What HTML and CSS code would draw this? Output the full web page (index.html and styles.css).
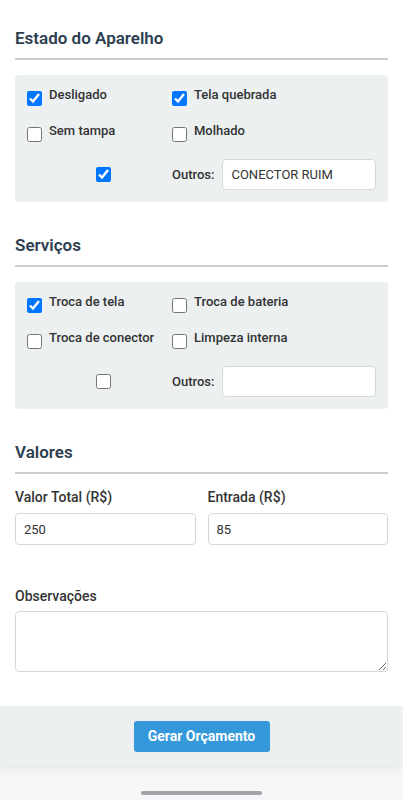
FILE: index.html
```html
<!DOCTYPE html>
<html lang="pt-BR">
<head>
  <meta charset="UTF-8" />
  <meta name="viewport" content="width=device-width, initial-scale=1.0"/>
  <title>Orçamento</title>
  <link rel="stylesheet" href="styles.css">
</head>
<body>
  <div class="page">
    <!-- Estado -->
    <div class="section">
      <h2>Estado do Aparelho</h2>
      <div class="box">
        <label class="check"><input type="checkbox" checked><span>Desligado</span></label>
        <label class="check"><input type="checkbox" checked><span>Tela quebrada</span></label>
        <label class="check"><input type="checkbox"><span>Sem tampa</span></label>
        <label class="check"><input type="checkbox"><span>Molhado</span></label>
        <div class="other-check"><input type="checkbox" checked></div>
        <div class="other">
          <span>Outros:</span>
          <input type="text" value="CONECTOR RUIM">
        </div>
      </div>
    </div>

    <!-- Servicos -->
    <div class="section">
      <h2>Serviços</h2>
      <div class="box">
        <label class="check"><input type="checkbox" checked><span>Troca de tela</span></label>
        <label class="check"><input type="checkbox"><span>Troca de bateria</span></label>
        <label class="check"><input type="checkbox"><span>Troca de conector</span></label>
        <label class="check"><input type="checkbox"><span>Limpeza interna</span></label>
        <div class="other-check"><input type="checkbox"></div>
        <div class="other">
          <span>Outros:</span>
          <input type="text" value="">
        </div>
      </div>
    </div>

    <!-- Valores -->
    <div class="section">
      <h2>Valores</h2>
      <div class="values">
        <div class="field">
          <label>Valor Total (R$)</label>
          <input type="text" value="250">
        </div>
        <div class="field">
          <label>Entrada (R$)</label>
          <input type="text" value="85">
        </div>
      </div>
      <div class="field notes">
        <label>Observações</label>
        <textarea></textarea>
      </div>
    </div>
  </div>

  <div class="footer">
    <button>Gerar Orçamento</button>
  </div>
  <div class="navbar"><div class="handle"></div></div>
</body>
</html>
```

FILE: styles.css
```css
body { font-family: Roboto, "Noto Sans", sans-serif; background: #fff; margin: 0; padding: 0; color: #333; }
.page { padding: 28px 15px 34px; }
h2 { font-size: 17px; line-height: 20px; font-weight: 600; color: #2c3e50; margin: 0; padding-bottom: 10px; border-bottom: 2px solid #c9ced2; }
.section { margin-bottom: 33px; }
.section:last-child { margin-bottom: 0; }
.box { background: #ecf0f1; border-radius: 4px; margin-top: 15px; padding: 12px; display: grid; grid-template-columns: 145px minmax(0, 1fr); grid-template-rows: 24px 24px 31px; row-gap: 12px; }
.check { display: flex; align-items: flex-start; gap: 7px; font-size: 13px; line-height: 16px; font-weight: 500; color: #333; }
input[type=checkbox] { width: 15px; height: 15px; margin: 4px 0 0; flex-shrink: 0; }
.other-check { display: flex; justify-content: center; align-items: center; padding-left: 7px; }
.other-check input { margin: 0; }
.other { display: flex; align-items: center; gap: 8px; font-size: 13px; font-weight: 500; }
.other input { flex: 1; min-width: 0; }
input[type=text], textarea { font-family: Roboto, sans-serif; font-size: 13px; color: #333; height: 31px; box-sizing: border-box; border: 1px solid #d5d9dc; border-radius: 4px; padding: 0 8px; background: #fff; }
.values { display: grid; grid-template-columns: minmax(0, 1fr) minmax(0, 1fr); gap: 12px; margin-top: 15px; }
.field label { display: block; font-size: 14px; line-height: 17px; font-weight: 500; margin-bottom: 7px; }
.field input { width: 100%; height: 32px; }
.notes { margin-top: 43px; }
.notes label { margin-bottom: 6px; }
textarea { width: 100%; height: 61px; display: block; }
.footer { background: #ecf0f1; height: 60px; display: flex; justify-content: center; align-items: center; box-shadow: 0 4px 8px rgba(0,0,0,0.06); position: relative; }
.footer button { background: #3498db; color: #fff; border: none; border-radius: 3px; font-family: Roboto, sans-serif; font-size: 14px; font-weight: 700; width: 136px; height: 31px; }
.navbar { height: 35px; background: #f6f7f9; display: flex; justify-content: center; align-items: flex-end; }
.handle { width: 121px; height: 4px; border-radius: 2px; background: #a3a5a8; margin-bottom: 6px; }
```
